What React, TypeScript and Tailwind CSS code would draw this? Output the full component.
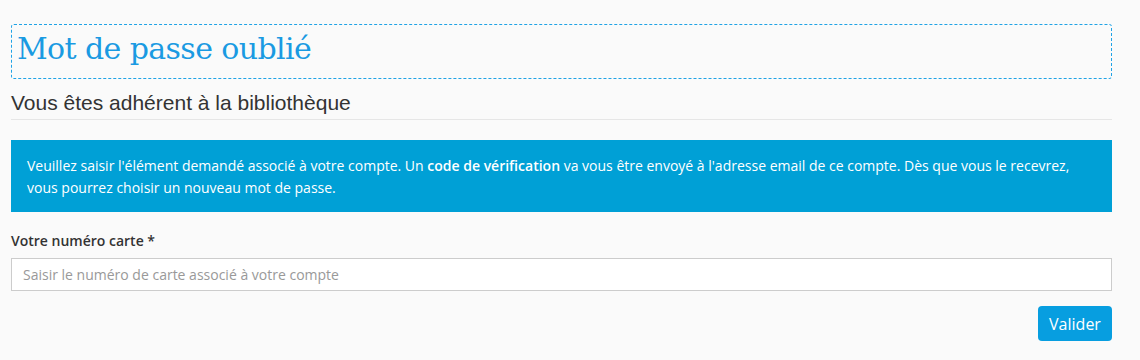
import React from "react";

export default function App() {
  return (
    <div className="min-h-[360px] w-[1140px] bg-[#fafafa] px-[11px] pt-[24px] font-['Open_Sans',sans-serif]">
      <div className="w-[1101px]">
        <div className="h-[55px] rounded-[3px] border border-dashed border-[#1fa3e6] px-[5px] pt-[4px]">
          <h1 className="text-[30px] leading-[40px] font-normal text-[#1a9ae2] tracking-[-0.6px] font-['DejaVu_Serif',serif]">
            Mot de passe oublié
          </h1>
        </div>
        <h2 className="mt-[12px] border-b border-[#e6e6e6] pb-[4px] text-[21px] leading-[24px] text-[#333] font-['Liberation_Sans',Arial,sans-serif]">
          Vous êtes adhérent à la bibliothèque
        </h2>
        <div className="mt-[20px] h-[72px] bg-[#00a0d6] px-[16px] pt-[15px] text-[14px] leading-[22px] text-white">
          Veuillez saisir l'élément demandé associé à votre compte. Un <b className="font-semibold">code de vérification</b> va vous être envoyé à l'adresse email de ce compte. Dès que vous le recevrez, vous pourrez choisir un nouveau mot de passe.
        </div>
        <label className="mt-[19px] block text-[14px] leading-[20px] font-semibold text-[#333]">
          Votre numéro carte *
        </label>
        <input
          className="mt-[7px] block h-[33px] w-full border border-[#ccc] bg-white px-[11px] text-[14px] text-[#555] placeholder:text-[#999] outline-none"
          placeholder="Saisir le numéro de carte associé à votre compte"
        />
        <div className="mt-[15px] flex justify-end">
          <button className="h-[35px] w-[74px] rounded-[4px] bg-[#079ee0] text-[16px] text-white">
            Valider
          </button>
        </div>
      </div>
    </div>
  );
}
